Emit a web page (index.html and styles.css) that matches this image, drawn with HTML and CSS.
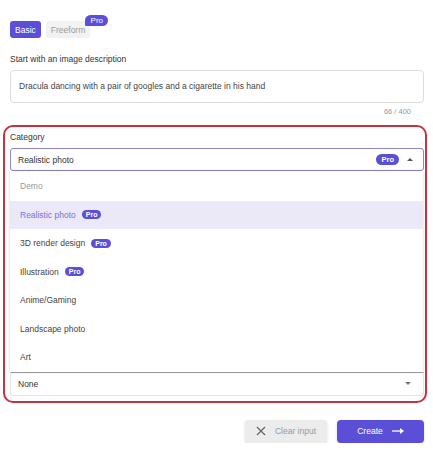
FILE: index.html
```html
<!DOCTYPE html>
<html>
	<head>
		<meta charset="UTF-8">
		<title>Create image</title>
		<link rel="stylesheet" href="styles.css">
	</head>
	<body>
		<div id="page">
			<div class="tabs">
				<span class="tab on">Basic</span>
				<span class="tab">Freeform<em class="pro corner">Pro</em></span>
			</div>

			<p class="label desc-label">Start with an image description</p>
			<div class="desc">Dracula dancing with a pair of googles and a cigarette in his hand</div>
			<p class="count">66 / 400</p>

			<div class="mark">
				<p class="label">Category</p>
				<div class="select open">
					<span>Realistic photo</span>
					<em class="pro">Pro</em>
					<i class="caret up"></i>
				</div>
				<ul class="menu">
					<li class="off">Demo</li>
					<li class="cur">Realistic photo <em class="pro">Pro</em></li>
					<li>3D render design <em class="pro">Pro</em></li>
					<li>Illustration <em class="pro">Pro</em></li>
					<li>Anime/Gaming</li>
					<li>Landscape photo</li>
					<li>Art</li>
				</ul>
				<div class="select plain">
					<span>None</span>
					<i class="caret"></i>
				</div>
			</div>

			<div class="actions">
				<button class="btn clear">
					<svg width="10" height="10" viewBox="0 0 10 10"><path d="M1 1L9 9M9 1L1 9" stroke="#666" stroke-width="1.2" fill="none"/></svg>
					Clear input
				</button>
				<button class="btn create">
					Create
					<svg width="12" height="8" viewBox="0 0 12 8"><path d="M0 4H9" stroke="#fff" stroke-width="1.3"/><path d="M8 1L12 4L8 7Z" fill="#fff"/></svg>
				</button>
			</div>
		</div>
	</body>
</html>
```

FILE: styles.css
```css
*{margin: 0;padding: 0;box-sizing: border-box;}
body{font-size: 8.5px;font-family: "Liberation Sans", Arial, sans-serif;color: #444;background: #fff;}
#page{
	width: 433px;
	padding: 21px 9px 0 10px;
}
.tabs{
	display: flex;
	gap: 5px;
	height: 17px;
}
.tab{
	position: relative;
	display: flex;
	align-items: center;
	padding: 0 5px;
	border-radius: 3px;
	background: #f2f2f2;
	color: #9a9a9a;
}
.tab.on{
	background: #5b4fd8;
	color: #fff;
}
.pro{
	display: inline-flex;
	align-items: center;
	justify-content: center;
	height: 10px;
	padding: 0 4px;
	border-radius: 6px;
	background: #5b4fd8;
	color: #fff;
	font-style: normal;
	font-size: 7.5px;
	font-weight: bold;
}
.pro.corner{
	position: absolute;
	top: -6px;
	right: -18px;
	width: 23px;
	height: 11px;
	padding: 0;
	border-radius: 6px 6px 6px 1px;
	font-weight: normal;
	font-size: 8px;
}
.label{
	height: 12px;
	line-height: 12px;
	color: #333;
}
.desc-label{
	margin-top: 15px;
}
.desc{
	margin-top: 5px;
	height: 33px;
	padding: 0 8px;
	line-height: 31px;
	border: 1px solid #dcdcdc;
	border-radius: 4px;
	color: #444;
}
.count{
	height: 10px;
	margin-top: 4px;
	padding-right: 13px;
	text-align: right;
	font-size: 7.5px;
	color: #999;
}
.mark{
	margin: 8px -3px 0 -7px;
	padding: 4px 1px 5px 5px;
	border: 2px solid #c2343f;
	border-radius: 10px;
}
.select{
	display: flex;
	align-items: center;
	height: 23px;
	margin-top: 5px;
	padding: 0 10px 0 7px;
	border: 1px solid #8f85cf;
	border-radius: 3px;
	color: #333;
}
.select span{flex: 1;}
.select .pro{margin-right: 8px;height: 11px;padding: 0 5px;}
.caret{
	width: 0;
	height: 0;
	border-left: 3px solid transparent;
	border-right: 3px solid transparent;
	border-top: 3px solid #777;
}
.caret.up{
	border-top: 0;
	border-bottom: 3px solid #555;
}
.menu{
	list-style: none;
	margin-right: 1px;
	padding-top: 1px;
	box-shadow: 0 0 3px rgba(0,0,0,0.18);
}
.menu li{
	display: flex;
	align-items: center;
	gap: 6px;
	height: 28.5px;
	padding-left: 10px;
	color: #444;
}
.menu li.off{color: #999;}
.menu li.cur{
	background: #ebe8f8;
	color: #7d72d2;
}
.menu .pro{height: 9px;padding: 0 4px;font-size: 7px;}
.select.plain{
	height: 24px;
	margin-top: 0;
	border: 1px solid #dfe8e2;
	border-top: 1px solid #9a9a9a;
	border-radius: 0 0 3px 3px;
	padding-right: 12px;
}
.actions{
	display: flex;
	justify-content: flex-end;
	gap: 10px;
	margin-top: 17px;
}
.btn{
	display: flex;
	align-items: center;
	justify-content: center;
	height: 23px;
	border: 0;
	border-radius: 4px;
	font-family: inherit;
	font-size: 8.5px;
	outline: none;
}
.btn.clear{
	width: 82px;
	gap: 9px;
	background: #ececec;
	color: #999;
	box-shadow: 0 1px 3px rgba(0,0,0,0.15);
}
.btn.create{
	width: 87px;
	gap: 9px;
	background: #5b4fd8;
	color: #fff;
	box-shadow: 0 1px 3px rgba(0,0,0,0.15);
}
```
